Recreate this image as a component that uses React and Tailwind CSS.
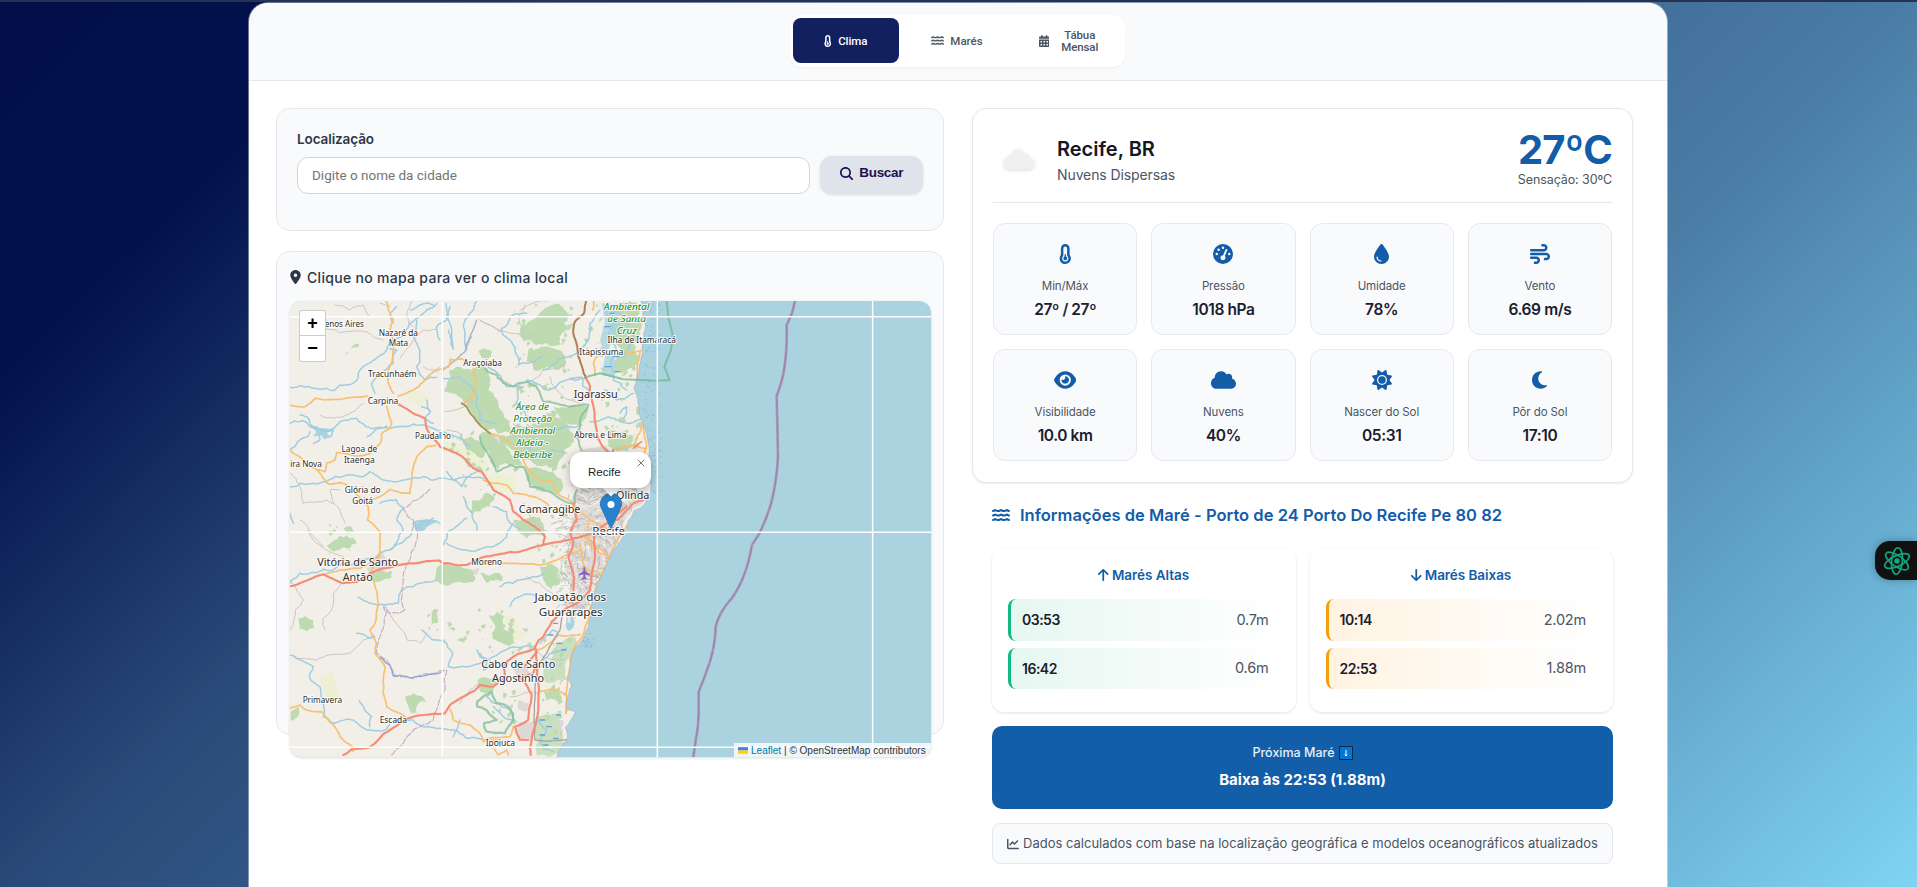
import React from "react";
import {
  FaTemperatureQuarter, FaWater, FaCalendarDays, FaMagnifyingGlass, FaLocationDot, FaGaugeHigh,
  FaDroplet, FaWind, FaEye, FaCloud, FaSun, FaMoon, FaArrowUp, FaArrowDown, FaChartLine,
} from "react-icons/fa6";

function wiggle(points, amp, seed) {
  let s = seed * 9301 + 49297;
  const rnd = () => {
    s = (s * 9301 + 49297) % 233280;
    return s / 233280 - 0.5;
  };
  let pts = points;
  let a = amp;
  for (let k = 0; k < 3; k++) {
    const out = [pts[0]];
    for (let i = 1; i < pts.length; i++) {
      const [x0, y0] = pts[i - 1];
      const [x1, y1] = pts[i];
      const d = Math.hypot(x1 - x0, y1 - y0);
      if (d > 9) {
        const f = Math.min(1, d / 40);
        out.push([(x0 + x1) / 2 + rnd() * a * f, (y0 + y1) / 2 + rnd() * a * f]);
      }
      out.push(pts[i]);
    }
    pts = out;
    a *= 0.7;
  }
  return "M" + pts.map((p) => p[0].toFixed(1) + " " + p[1].toFixed(1)).join("L");
}

const parse = (str) => str.split(" ").map((p) => p.split(",").map(Number));

const COAST = "1082,33 1088,80 1096,115 1090,150 1088,190 1078,235 1070,268 1062,292 1074,330 1080,380 1095,415 1103,450 1106,500 1108,560 1112,610 1095,640 1062,662 1046,690 1030,735 1008,770 990,800 968,850 950,890 938,930 930,985 915,1035 888,1070 872,1110 862,1165 876,1182 864,1220 860,1252 886,1266 872,1290 856,1312 862,1350 842,1372 830,1402";

const FORESTS = [
  "494,305 512,262 508,240 530,230 560,238 590,225 625,240 630,275 640,310 655,335 668,365 690,392 690,430 655,432 615,415 590,395 572,365 550,335 528,312",
  "720,115 750,92 790,60 815,45 850,50 868,75 850,98 862,120 838,140 842,165 800,160 770,165 748,150 722,142",
  "745,180 790,170 840,180 858,215 835,240 800,232 760,240 740,215",
  "595,182 615,175 636,185 632,200 605,202",
  "197,190 238,160 236,170 202,194",
  "655,435 700,425 760,400 810,380 860,395 880,430 870,470 850,500 830,530 800,525 760,520 720,500 690,475 660,465",
  "820,350 880,345 925,350 920,380 900,410 850,400",
  "598,435 620,425 650,450 680,470 710,500 730,530 700,525 672,520 655,545 640,530 630,490 605,470",
  "735,535 790,540 830,560 850,590 840,610 800,600 760,590 740,570",
  "545,448 590,450 612,470 606,505 585,490 560,480",
  "580,635 612,612 640,618 630,650 600,665 575,655",
  "700,690 760,680 790,700 780,735 740,745 715,725",
  "985,50 1040,40 1080,60 1085,110 1060,160 1080,200 1060,235 1020,250 990,230 1030,190 1000,150 990,100",
  "985,420 1030,425 1060,440 1060,470 1020,482 985,470",
  "1068,352 1088,348 1092,372 1070,376",
  "275,850 300,838 335,842 336,862 300,874 270,870",
  "55,985 75,978 100,990 104,1015 85,1022 60,1018",
  "140,768 170,748 200,735 222,742 230,760 200,775 160,785",
  "190,715 215,710 222,722 205,732",
  "455,965 475,960 472,1000 455,1008",
  "625,975 650,965 672,980 665,1010 700,1040 710,1062 680,1065 655,1055 635,1030 645,1005",
  "530,1050 560,1035 552,1058",
  "375,1225 400,1210 425,1218 438,1235 410,1250 412,1268 390,1262",
  "592,1170 640,1165 655,1180 640,1200 600,1205",
  "470,835 540,830 580,848 585,870 520,878 465,870",
  "600,848 660,850 668,872 620,880",
  "790,1130 830,1060 880,1040 890,1060 870,1100 860,1170 820,1180 790,1165",
  "792,1205 820,1195 842,1212 835,1240 800,1232",
  "760,1290 820,1270 850,1280 845,1330 850,1350 820,1395 770,1395 765,1330",
  "780,830 835,835 840,880 815,900 790,870",
  "32,1265 52,1250 58,1268 42,1292 32,1290",
];

const PALE = [
  "375,310 425,305 455,328 430,345 395,338",
  "485,445 540,460 590,490 622,515 622,560 590,545 560,520 520,490 490,465",
  "610,575 640,545 672,555 705,560 710,600 670,608 640,590",
  "120,1155 155,1145 175,1230 140,1240",
  "670,970 705,990 740,1040 715,1050 690,1030",
];

const URBAN = [
  "890,600 940,600 985,640 1030,640 1060,620 1095,625 1060,655 1030,700 1008,760 975,820 940,900 920,960 885,990 850,960 870,900 850,850 870,790 860,730 880,690 870,640",
  "900,480 960,470 1000,490 1000,600 930,600 890,560",
  "610,440 650,430 660,455 640,480 612,468",
  "260,838 300,780 315,800 345,830 310,840 280,865",
  "520,830 600,835 590,855 540,850",
  "715,1230 745,1240 740,1265 712,1255",
  "715,1300 760,1292 755,1350 712,1345",
  "800,1298 850,1290 850,1325 815,1330",
  "700,1135 740,1120 750,1150 720,1180",
];

const RIVERS = [
  "30,292 75,290 110,296 160,302 180,285 215,282 240,240 275,215 312,190 330,160 365,140 385,110 410,85 440,60 470,40",
  "410,90 400,140 420,180 410,230 435,270 470,262",
  "285,310 275,285 290,262 340,220 350,180 330,175",
  "392,60 420,45 460,45", "340,100 330,70 350,50",
  "30,400 70,392 125,418 140,425 180,395 230,385 258,410 300,412 360,410 430,405 470,420 530,440 570,470",
  "60,375 90,400 125,418 120,450 100,460", "125,418 160,420 150,440",
  "30,480 60,450 90,425", "262,440 300,415 320,408",
  "440,330 450,365 435,385 460,400", "425,350 452,365",
  "30,590 60,580 110,582 150,568 220,555 250,560 270,545 310,570 370,570 430,560 470,568 520,570 560,560 610,565",
  "500,545 520,570 545,590 560,565 590,545", "505,120 515,150 520,178 505,90 510,50",
  "575,140 560,180 555,90 580,60 590,33", "480,150 470,110 500,90 498,40",
  "665,115 690,150 710,195 715,225 765,215 785,200", "665,115 690,80 740,70",
  "490,265 540,262 580,300 590,350 600,390 650,400",
  "712,295 710,340 740,380 790,385", "590,225 640,240 680,290 730,290",
  "960,60 930,100 925,150 890,190 830,215 790,240", "870,265 905,262 925,300",
  "740,270 800,300 860,270 920,262", "300,640 350,630 370,655 350,690 370,720 330,780",
  "40,700 30,670", "410,710 430,695 460,685 400,700 395,730 370,755 330,780 290,800 240,812",
  "30,880 60,850 110,848 150,842 200,820 240,812", "235,922 270,940 315,945 355,940 365,900 420,880 470,870",
  "490,765 500,730 540,700 560,685", "500,760 560,780 640,770 680,740 700,700",
  "550,620 560,650 580,690 590,720", "640,650 680,665 690,700 720,720",
  "690,950 705,925 750,912 770,925", "660,890 700,880 760,860 790,850",
  "425,1020 460,1050 500,1060 518,1090 505,1130 560,1130 600,1120 640,1100 700,1070 760,1070",
  "30,1095 60,1110 100,1130 90,1165 120,1190 130,1280 160,1300 220,1290 260,1320 320,1318 350,1290 400,1290 440,1310 520,1320 560,1345 620,1350 690,1352",
  "238,1232 255,1262 275,1280 270,1310", "540,1290 530,1320 520,1340",
  "230,1030 270,1045 285,1040", "590,1080 620,1110 610,1140 640,1120 600,1090",
  "980,60 1000,100 985,140 1010,180 990,220 1000,270 1040,300",
  "1000,60 1040,90 1060,140 1030,200", "975,300 1010,330 1060,310",
  "1020,370 1040,350 1030,385", "930,395 985,380 1040,400 1090,385",
  "800,430 850,410 905,405", "860,490 820,480 770,500 740,470",
  "780,1060 800,1035 820,1020 835,1035 815,1060", "790,1110 820,1085 860,1075",
  "620,1220 650,1240 690,1260 700,1290 670,1280 640,1250", "775,1290 800,1320 780,1360 820,1385",
  "400,700 440,690 480,700", "405,705 430,720 450,690",
];

const MINOR = [
  "135,115 180,128 260,125 310,150", "165,45 210,60 250,45 270,80", "360,205 400,150 430,120 470,118",
  "400,30 380,80 400,110", "250,340 210,370 160,385 120,375", "30,548 60,590 70,640 110,635 140,630 180,660 195,700",
  "430,230 460,240 480,230", "495,365 540,355 560,345 590,330", "600,90 640,110 700,130 740,150 770,130",
  "80,720 110,760 160,790 190,800 200,830", "60,690 100,740 130,770", "190,860 160,910 155,960 130,985 135,1020",
  "30,870 70,930 45,960 40,1000 30,1020", "40,1100 110,1110 150,1095 210,1090 250,1050 280,1035",
  "315,945 340,990 360,1015 380,1050 420,1060 440,1030", "650,265 700,290 760,270 790,240 850,225",
  "700,400 720,440 760,480", "560,470 540,430 500,420", "300,40 330,50", "720,60 760,40 800,33",
  "540,1240 570,1200 600,1180", "690,1220 730,1210 770,1210", "810,260 830,300 870,330 900,340",
  "735,45 715,80 730,120", "180,600 150,600 160,640", "760,1080 790,1100 850,1110",
  "730,640 760,690 790,720 860,740", "740,860 780,880 800,900 830,930 870,940",
];

const ORANGE = [
  "318,33 325,60 340,90 330,125 345,160 338,200 325,240 325,280 340,310",
  "30,345 75,350 105,325 170,328 262,318", "355,318 400,300 430,275 455,250 480,238 505,232 510,208 545,206 560,215",
  "580,235 590,275 585,310 552,340", "320,350 335,400 330,415 305,430 300,460 270,490 230,498 170,488 165,510 140,520 135,545 112,540 85,520 30,482",
  "112,540 145,582 180,578 215,595 225,610", "280,628 330,598 360,608 390,610 395,560 410,500 440,470 468,466",
  "225,608 265,650 262,690 300,725 300,790 275,840 280,870 295,940 285,1000 270,1020 290,1060 285,1090 315,1130 310,1210 320,1250 375,1280",
  "130,855 180,840 240,835 300,800", "630,432 655,437 700,465 730,510 750,545 780,570 820,575 830,610 880,640 930,690 990,720",
  "600,825 700,820 780,825 830,810 870,790 900,780", "610,570 680,585 700,610 760,620 800,640 850,680",
  "940,33 938,60", "945,255 940,220 960,190 980,185", "1030,185 1060,190 1082,182 1072,230 1072,265",
  "1093,390 1078,430 1060,465 1010,478", "1060,465 1100,475", "1090,400 1100,460 1095,500",
  "30,1255 60,1245 80,1260 125,1265 160,1305 180,1340 218,1370 218,1385", "510,1258 520,1290 570,1305 600,1330 610,1355 660,1350",
  "770,1080 800,1065 835,1035 900,1033", "775,1205 820,1195 860,1215 858,1270",
  "640,1370 655,1395 680,1380 685,1395", "990,800 960,790 930,750 880,725", "900,760 905,810 920,840 960,850",
  "925,700 920,760 960,775 985,800", "700,1310 690,1340 620,1345",
  "910,1035 885,1070 870,1110 862,1165 858,1210 858,1270",
  "1045,700 1010,755 988,800 965,850 945,900 932,950 925,990 910,1035",
];

const REDS = [
  "355,343 400,370 435,385 440,415 465,450 480,470 530,490 580,535 605,545 640,600 690,630 700,665 730,690 770,715 795,740 790,765",
  "915,262 930,290 938,340 950,420 965,465 1000,500 1020,540", "880,640 890,690 870,730 880,760 865,800 880,850 880,900",
  "30,888 70,875 130,853 190,880 230,876 270,850 310,835 400,820 480,812 488,820 560,825 600,805 660,792 720,785 800,762 880,745 940,725 980,700",
  "980,700 1010,690 1060,640 1090,630", "945,730 945,790 935,850 930,900 890,940 840,970 815,995 790,1040 765,1070 770,1110 775,1180 775,1260 768,1300 755,1350 752,1395",
  "765,1075 700,1100 670,1130 675,1160 640,1190 600,1185 560,1215 510,1245 495,1270 430,1275 385,1285 330,1320 270,1372 215,1378 190,1395",
  "720,1160 755,1215 745,1290 705,1310 720,1350 745,1350", "715,1160 760,1150 770,1120",
  "1000,480 985,520 990,600 1000,690", "1085,455 1060,475",
  "985,700 1040,650", "770,1085 735,1130",
];

function urbanLines() {
  let s = 77;
  const rnd = () => {
    s = (s * 9301 + 49297) % 233280;
    return s / 233280;
  };
  let d = "";
  for (let i = 0; i < 330; i++) {
    const y = 500 + rnd() * 470;
    const right = y < 620 ? 1090 : 1085 - (y - 620) * 0.48;
    const left = y < 600 ? 880 + rnd() * 30 : 835 + rnd() * 30;
    const x = left + rnd() * (right - left - 12);
    const a = rnd() * 3.14;
    const l = 10 + rnd() * 26;
    const dx = Math.cos(a) * l;
    const dy = Math.sin(a) * l;
    d += `M${x.toFixed(0)} ${y.toFixed(0)}q${(dx / 2 + 5).toFixed(0)} ${(dy / 2 - 4).toFixed(0)} ${Math.min(dx, right - x).toFixed(0)} ${dy.toFixed(0)}`;
  }
  return d;
}

function speckles() {
  let s = 1234;
  const rnd = () => {
    s = (s * 9301 + 49297) % 233280;
    return s / 233280;
  };
  const zones = [
    [700, 40, 170, 200, 60], [690, 280, 200, 260, 70], [480, 420, 140, 150, 20], [540, 480, 100, 200, 14],
    [960, 200, 110, 270, 45], [440, 960, 260, 110, 18], [110, 700, 120, 90, 10], [620, 1000, 130, 90, 14],
    [780, 1040, 90, 330, 40], [760, 640, 100, 280, 22], [600, 1200, 110, 120, 12], [900, 40, 70, 160, 14],
  ];
  let d = "";
  for (const [x, y, w, h, n] of zones) {
    for (let i = 0; i < n; i++) {
      const px = x + rnd() * w;
      const py = y + rnd() * h;
      const r = 3 + rnd() * 9;
      d += `M${px.toFixed(0)} ${py.toFixed(0)}l${r.toFixed(0)} ${(-r * rnd()).toFixed(0)}l${(r * rnd()).toFixed(0)} ${(r * 0.9).toFixed(0)}l${(-r).toFixed(0)} ${(r * 0.8).toFixed(0)}z`;
    }
  }
  return d;
}

function seaDots() {
  let s = 991;
  const rnd = () => {
    s = (s * 9301 + 49297) % 233280;
    return s / 233280;
  };
  let d = "";
  for (let i = 0; i < 120; i++) d += `M${(1092 + rnd() * 52).toFixed(0)} ${(40 + rnd() * 580).toFixed(0)}h3`;
  for (let i = 0; i < 26; i++) d += `M${(905 + rnd() * 38).toFixed(0)} ${(1030 + rnd() * 45).toFixed(0)}h3`;
  return d;
}

const LABELS = [
  ["enos Aires", 193, 110, 118, 25], ["Nazaré da", 355, 137, 118, 25], ["Mata", 355, 169, 58, 25],
  ["Tracunhaém", 337, 260, 146, 25], ["Carpina", 309, 341, 92, 25], ["Araçoiaba", 608, 228, 116, 25],
  ["Paudalho", 459, 446, 108, 25], ["Lagoa de", 238, 487, 107, 25], ["Itaenga", 238, 518, 92, 25],
  ["ira Nova", 78, 530, 95, 25], ["Glória do", 248, 610, 108, 25], ["Goitá", 248, 642, 62, 25],
  ["Itapissuma", 964, 195, 132, 25], ["Ilha de Itamaracá", 1085, 158, 205, 25], ["Igarassu", 947, 323, 132, 31],
  ["Abreu e Lima", 961, 443, 157, 25], ["Camaragibe", 809, 670, 185, 32], ["Olinda", 1058, 627, 100, 32],
  ["Recife", 986, 735, 98, 32], ["Vitória de Santo", 233, 829, 243, 32], ["Antão", 233, 872, 90, 32],
  ["Moreno", 620, 826, 92, 25], ["Jaboatão dos", 871, 933, 215, 32], ["Guararapes", 872, 978, 192, 32],
  ["Cabo de Santo", 715, 1134, 222, 32], ["Agostinho", 714, 1176, 156, 32], ["Primavera", 127, 1240, 118, 25],
  ["Escada", 340, 1298, 82, 25], ["Ipojuca", 661, 1367, 88, 25],
];

const PARKS = [
  ["Área de", 757, 361, 100], ["Proteção", 758, 397, 116], ["Ambiental", 758, 433, 135], ["Aldeia -", 757, 469, 98],
  ["Beberibe", 758, 505, 117], ["Ambiental", 1040, 61, 137], ["de Santa", 1040, 95, 116], ["Cruz", 1040, 131, 60],
];

const SEA_BORDER = "M1545 33L1536 70L1520 105Q1522 180 1512 240Q1508 270 1490 318L1492 400L1494 500Q1490 580 1472 645Q1458 690 1437 732L1416 765Q1408 810 1396 845Q1378 895 1355 925Q1318 965 1307 1010Q1306 1060 1290 1115Q1275 1160 1256 1205L1256 1270Q1254 1320 1248 1345L1240 1402";

function MapDrawing() {
  const land = wiggle(parse(COAST), 9, 5) + "L30 1402L30 33Z";
  return (
    <svg viewBox="0 0 641 456" className="block h-[456px] w-[641px]">
      <defs>
        <clipPath id="land"><path d={land} /></clipPath>
      </defs>
      <rect width="641" height="456" fill="#aad3df" />
      <g transform="translate(-10 -11) scale(.33333)" fill="none" strokeLinejoin="round" strokeLinecap="round">
        <path d={seaDots()} stroke="#7fb2d2" strokeWidth="2.5" opacity=".75" />
        <path d={land} fill="#f2efe9" />
        <g clipPath="url(#land)">
          {PALE.map((p, i) => <path key={i} d={wiggle(parse(p), 14, i + 2) + "Z"} fill="#eef0d5" />)}
          {URBAN.map((p, i) => <path key={i} d={wiggle(parse(p), 14, i + 9) + "Z"} fill="#dcd9d6" />)}
          {FORESTS.map((p, i) => <path key={i} d={wiggle(parse(p), 22, i + 3) + "Z"} fill={i === 26 || i === 28 ? "#c9dfc0" : "#bddab1"} />)}
          <path d={speckles()} fill="#bddab1" />
          <path d="M965 40L1010 45L1020 90L1000 140L985 180L1010 215L1000 262L965 255L975 200L960 150L975 100Z" fill="#aad3df" opacity=".8" />
          <path d="M860 985q20 -12 24 8q0 24 -18 30q-14 -8 -6 -38z" fill="#aad3df" />
          <path d="M90 405l25 5l-8 8l30 -4l22 6l-18 8l10 14l-18 6l-10 -12l-24 4l10 -14zM405 700l30 -8l40 -2l-22 14l-18 8l-14 14l-16 -6z" fill="#aad3df" />
          {MINOR.map((p, i) => <path key={i} d={wiggle(parse(p), 10, i + 31)} stroke="#c9c4c4" strokeWidth="3" />)}
          <path d={urbanLines()} stroke="#b9b5b5" strokeWidth="2.4" />
          <path d={urbanLines()} transform="translate(-8 14)" stroke="#fff" strokeWidth="2" opacity=".8" />
          {RIVERS.map((p, i) => <path key={i} d={wiggle(parse(p), 15, i + 11)} stroke="#a0cee0" strokeWidth="4.5" />)}
          <path d={wiggle(parse("615,235 650,255 670,280 700,290 740,275 770,290 790,335 870,350 925,345 900,395 890,440 905,480"), 12, 4)} stroke="#86bf9c" strokeWidth="6" opacity=".8" />
          <path d={wiggle(parse("600,440 615,480 640,520 650,545 690,525 730,530 750,590 790,600 830,620 885,640 890,600"), 12, 8)} stroke="#86bf9c" strokeWidth="6" opacity=".8" />
          <path d={wiggle(parse("592,1235 635,1205 650,1240 690,1255 700,1290 675,1330 620,1325 612,1300 650,1290 620,1260 592,1250 592,1235"), 10, 7)} stroke="#86bf9c" strokeWidth="7" opacity=".8" />
          <path d={wiggle(parse("590,90 570,140 555,185 520,215 490,240"), 8, 6)} stroke="#9c9cc0" strokeWidth="4" opacity=".8" />
          <path d={wiggle(parse("600,90 660,125 665,118"), 8, 6)} stroke="#c6b1c8" strokeWidth="3" strokeDasharray="14 6" />
          <path d={wiggle(parse("450,598 410,630 370,655 400,690 412,730 405,770 370,850 365,900 375,960 330,970 310,950 320,970 300,1040 290,1090 330,1130 345,1160 400,1165 460,1150 500,1140 495,1200 460,1290 420,1310 370,1360 335,1395"), 12, 3)} stroke="#c4aec6" strokeWidth="3.5" strokeDasharray="18 6" />
          <path d={wiggle(parse("300,1102 330,1125 340,1158 395,1165 440,1155 490,1142"), 12, 13)} stroke="#8fa5cf" strokeWidth="4" />
          {ORANGE.map((p, i) => <path key={i} d={wiggle(parse(p), 7, i + 17)} stroke="#f9bf72" strokeWidth="5" />)}
          <path d={wiggle(parse("545,340 560,350 580,380 600,405 630,430"), 6, 2)} stroke="#a59a5a" strokeWidth="6" />
          <path d={wiggle(parse("918,33 912,70 885,95 880,130 892,170 895,200 910,245 918,262"), 6, 2)} stroke="#b07f4d" strokeWidth="6" />
          <path d={wiggle(parse("850,960 840,1020 800,1090 775,1130 765,1190 762,1290 765,1350 820,1352 860,1350"), 5, 2)} stroke="#a9a5a3" strokeWidth="4" />
          {REDS.map((p, i) => <path key={i} d={wiggle(parse(p), 7, i + 5)} stroke="#f58d76" strokeWidth={i === 10 ? 5 : 6.5} />)}
          <path d="M960 80h14M975 110h16M990 70h12M985 150h14M1000 200h16M975 230h18M1005 245h14M820 1000h12M805 1035h14M830 1060h16M845 1080h12M780 1290h14M800 1310h14M780 1335h14M820 1345h14M790 1365h14M830 1275h12" stroke="#5aa5dc" strokeWidth="4" />
        </g>
        <path d={wiggle(parse(COAST), 9, 5)} stroke="#a08fb4" strokeWidth="2" opacity=".6" />
        <path d="M1160 33L1165 80L1178 135L1173 180L1153 230L1169 270L1130 272L1030 268L960 250L915 262" stroke="#6db892" strokeWidth="6" opacity=".75" />
        <path d={SEA_BORDER} stroke="#a596b5" strokeWidth="8" />
        <path d={SEA_BORDER} stroke="#9a7ba5" strokeWidth="2.5" strokeDasharray="30 8" />
        <path transform="translate(913 850) scale(1.5)" d="M-2 -11q2 -3 4 0v7l9 6v3l-9 -3v6l3 3v2l-5 -1l-5 1v-2l3 -3v-6l-9 3v-3l9 -6z" fill="#8461c4" />
        <g textAnchor="middle" fontFamily="Noto Sans, sans-serif" paintOrder="stroke" stroke="#fff" strokeOpacity=".8" strokeWidth="6">
          {LABELS.map(([t, x, y, w, s]) => (
            <text key={t} x={x} y={y} textLength={w} lengthAdjust="spacingAndGlyphs" fontSize={s} fill="#2e2e2e">{t}</text>
          ))}
          {PARKS.map(([t, x, y, w]) => (
            <text key={t + y} x={x} y={y} textLength={w} lengthAdjust="spacingAndGlyphs" fontSize="29" fontStyle="italic" fill="#118811">{t}</text>
          ))}
        </g>
        <path d="M487 30V1405M1132 30V1405M1778 30V1405M28 80H1955M28 727H1955M28 1372H1955" stroke="#fff" strokeWidth="4.5" strokeLinecap="butt" />
      </g>
    </svg>
  );
}

const STATS = [
  [FaTemperatureQuarter, "w-[12.5px]", "Min/Máx", "27º / 27º"],
  [FaGaugeHigh, "w-5", "Pressão", "1018 hPa"],
  [FaDroplet, "w-[15px]", "Umidade", "78%"],
  [FaWind, "w-5", "Vento", "6.69 m/s"],
  [FaEye, "w-[22.5px]", "Visibilidade", "10.0 km"],
  [FaCloud, "w-[25px]", "Nuvens", "40%"],
  [FaSun, "w-5", "Nascer do Sol", "05:31"],
  [FaMoon, "w-[15px]", "Pôr do Sol", "17:10"],
];

function Stat({ Icon, width, label, value }) {
  return (
    <div className="flex h-[112px] flex-col items-center rounded-xl border border-[#e7e9ee] bg-[#f9fafc] pt-5">
      <Icon className={"h-5 text-[#125ca8] " + width} />
      <span className="mt-[12px] text-[11.5px] leading-5 tracking-[-0.1px] text-[#4b5563]">{label}</span>
      <span className="mt-[2px] text-[15.5px] leading-6 font-semibold tracking-[-0.4px] text-[#1a202c]">{value}</span>
    </div>
  );
}

function Tides({ Icon, title, rows, row }) {
  return (
    <div className="h-[163px] flex-1 rounded-xl bg-white px-4 pt-[16px] shadow-[0_1px_3px_rgba(0,0,0,0.12)]">
      <h3 className="flex h-5 items-center justify-center gap-[3px] text-[13.5px] font-semibold tracking-[-0.05px] text-[#125ca8]">
        <Icon className="h-[14px] w-[10.5px]" />{title}
      </h3>
      <div className="mt-[14px] flex flex-col gap-[7px]">
        {rows.map(([time, h]) => (
          <div key={time} className={"flex h-[41.5px] items-center justify-between rounded-lg border-l-[3px] pr-[11px] pl-[11px] " + row}>
            <span className="text-[14px] font-semibold tracking-[-0.5px] text-[#1a202c]">{time}</span>
            <span className="text-[14.5px] tracking-[-0.2px] text-[#4b5563]">{h}</span>
          </div>
        ))}
      </div>
    </div>
  );
}

export default function App() {
  return (
    <div className="relative h-[887px] w-full overflow-hidden bg-[linear-gradient(135deg,#020f49_0%,#03124c_14%,#294a78_32%,#4a7ca6_68%,#7fd4f3_100%)] pt-[2px] font-['Inter',sans-serif]">
      <div className="absolute inset-x-0 top-0 h-[2px] bg-[#26324f]" />
      <main className="ml-[248px] h-[900px] w-[1420px] overflow-hidden rounded-t-[20px] border border-white/40 bg-white bg-clip-padding">
        <header className="flex h-[78px] justify-center border-b border-[#e5e7eb] bg-[#f9fafc] pt-[12px] pr-[2px]">
          <nav className="flex h-[52px] w-[335px] gap-[5.5px] rounded-xl bg-white p-[3px] font-['Roboto',sans-serif] text-[11.5px] leading-[12px] font-medium text-[#4b5563] shadow-[0_1px_2px_rgba(0,0,0,0.05)]">
            <button className="flex h-[45px] w-[106px] items-center justify-center gap-[7px] rounded-lg bg-[#13205f] text-white">
              <FaTemperatureQuarter className="h-[12px] w-[7.5px]" /><span className="tracking-[-0.1px]">Clima</span>
            </button>
            <button className="flex h-[45px] w-[106px] items-center justify-center gap-[6px]">
              <FaWater className="size-[13px]" /><span>Marés</span>
            </button>
            <button className="flex h-[45px] w-[106px] items-center justify-center gap-[12px]">
              <FaCalendarDays className="h-[12px] w-[10.5px]" /><span className="tracking-[-0.1px]">Tábua<br />Mensal</span>
            </button>
          </nav>
        </header>

        <div className="flex gap-7 pt-[27px] pl-[27px]">
          <section className="flex w-[668px] flex-col gap-5">
            <div className="h-[123px] rounded-[14px] border border-[#e5e7eb] bg-[#f9fafc] px-5 pt-[20px]">
              <label className="block text-[13.5px] leading-5 font-semibold tracking-[-0.1px] text-[#2d3748]">Localização</label>
              <div className="mt-[7px] flex items-end gap-[10px]">
                <div className="flex h-[37px] w-[513px] items-center rounded-[11px] border border-[#d1d5db] bg-white px-[14px] font-['Roboto',sans-serif] text-[13.5px] text-[#757575]">Digite o nome da cidade</div>
                <button className="flex h-[38px] w-[103px] items-center justify-center gap-[6px] rounded-xl bg-[#dfe3ea] pb-[3px] font-['Liberation_Sans',sans-serif] text-[13.5px] font-bold tracking-[-0.3px] text-[#1c1152] shadow-[0_1px_3px_rgba(0,0,0,0.12)]">
                  <FaMagnifyingGlass className="size-[13.5px]" />Buscar
                </button>
              </div>
            </div>

            <div className="h-[484px] rounded-[14px] border border-[#e5e7eb] bg-[#f9fafc] px-[13px] pt-[15px]">
              <h2 className="flex h-5 items-center gap-[6px] text-[14px] font-medium tracking-[0.3px] text-[#2d3748]">
                <FaLocationDot className="h-[14px] w-[11px]" />Clique no mapa para ver o clima local
              </h2>
              <div className="relative mt-[14px] h-[456px] w-[641px] overflow-hidden rounded-xl shadow-[0_1px_3px_rgba(0,0,0,0.15)]">
                <MapDrawing />
                <div className="absolute top-[9px] left-[9px] w-[27px] rounded-[3px] border border-black/20 bg-white text-center font-['Liberation_Sans',sans-serif] text-[18px] leading-[25px] font-bold text-black">
                  <div className="h-[25px] border-b border-[#ccc]">+</div>
                  <div className="h-[25px]">−</div>
                </div>
                <svg viewBox="0 0 25 41" className="absolute top-[192px] left-[310px] h-[36px] w-[22px]">
                  <path d="M12.5 .5C5.6 .5 .5 5.8 .5 12.4c0 2.2.9 4.600 1.800 6.400L12.500 40.500 22.700 18.800c1-1.800 1.800-4.200 1.800-6.400C24.500 5.800 19.400 .5 12.500 .5z" fill="#2a81cb" stroke="#2270b3" />
                  <circle cx="12.500" cy="13" r="4" fill="#fff" />
                </svg>
                <div className="absolute top-[181px] left-[315px] size-[12px] rotate-45 bg-white shadow-md" />
                <div className="absolute top-[151px] left-[280px] h-[36px] w-[81px] rounded-xl bg-white pt-[13px] pl-[18px] font-['Liberation_Sans',sans-serif] text-[11.500px] leading-[14px] text-[#222] shadow-[0_2px_8px_rgba(0,0,0,0.3)]">Recife</div>
                <svg viewBox="0 0 8 8" className="absolute top-[158px] left-[347px] size-2"><path d="M.7 .7l6.600 6.600M7.300 .7L.7 7.300" stroke="#757575" strokeWidth="1" /></svg>
                <div className="absolute right-0 bottom-0 flex h-[14px] w-[197px] items-center bg-white/80 pl-1 font-['Liberation_Sans',sans-serif] text-[10px] tracking-[0.02px] whitespace-nowrap text-[#333]">
                  <svg viewBox="0 0 12 8" className="mr-[3px] h-[7px] w-[10px]"><path fill="#4C7BE1" d="M0 0h12v4H0z" /><path fill="#FFD500" d="M0 4h12v4H0z" /></svg>
                  <span className="text-[#0078a8]">Leaflet</span><span>&nbsp;| © OpenStreetMap contributors</span>
                </div>
              </div>
            </div>
          </section>

          <section className="w-[661px]">
            <div className="h-[375px] rounded-[14px] border border-[#e5e7eb] bg-white px-5 shadow-[0_1px_2px_rgba(0,0,0,0.08)]">
              <div className="flex h-[94px] border-b border-[#e5e7eb]">
                <svg viewBox="0 0 32 24" className="mt-[38px] ml-[10px] h-6 w-8 drop-shadow-sm"><path d="M6 22a6 6 0 0 1-1-11.500Q6 8 9 7.500Q12 2 15 2Q19 2 21 6.500Q26 7 27 11.500Q31 13 31 16.500Q31 21 26 22z" fill="#f0f0ef" /></svg>
                <div className="ml-[22px] pt-[26px]">
                  <h1 className="text-[20px] leading-7 font-semibold text-[#111827]">Recife, BR</h1>
                  <p className="mt-[2px] text-[14px] leading-5 tracking-[-0.1px] text-[#4b5563]">Nuvens Dispersas</p>
                </div>
                <div className="ml-auto pt-[21px] text-right">
                  <div className="text-[40px] leading-[40px] font-bold tracking-[-0.8px] text-[#125ca8]">27ºC</div>
                  <p className="text-[12.5px] leading-5 tracking-[-0.1px] text-[#4b5563]">Sensação: 30ºC</p>
                </div>
              </div>
              <div className="mt-5 grid grid-cols-4 gap-[14px]">
                {STATS.map(([Icon, width, label, value]) => <Stat key={label} Icon={Icon} width={width} label={label} value={value} />)}
              </div>
            </div>

            <div className="px-5">
              <h2 className="mt-[20px] flex h-6 items-center gap-[10px] text-[16.500px] font-semibold tracking-[0.03px] whitespace-nowrap text-[#125ca8]">
                <FaWater className="h-[16px] w-[18px]" />Informações de Maré - Porto de 24 Porto Do Recife Pe 80 82
              </h2>
              <div className="mt-[22px] flex gap-[14px]">
                <Tides Icon={FaArrowUp} title="Marés Altas" rows={[["03:53", "0.7m"], ["16:42", "0.6m"]]} row="border-[#10b981] bg-[linear-gradient(90deg,#e6f7f1,#ffffff)]" />
                <Tides Icon={FaArrowDown} title="Marés Baixas" rows={[["10:14", "2.02m"], ["22:53", "1.88m"]]} row="border-[#f59e0b] bg-[linear-gradient(90deg,#fff3e2,#ffffff)]" />
              </div>
              <div className="mt-[14px] h-[83px] rounded-[10px] bg-[#135ea9] pt-[17px] text-center text-white">
                <p className="flex h-5 items-center justify-center gap-1 text-[12.500px] font-medium text-white/90">
                  Próxima Maré
                  <svg viewBox="0 0 14 14" className="size-[14px]"><path d="M.5 .5h13v13H.5z" fill="#0078d7" stroke="#0b2545" /><path d="M7 4v5.500M5.800 8.500L7 10L8.200 8.500" stroke="#fff" fill="none" /></svg>
                </p>
                <p className="mt-[5px] text-[15px] leading-6 font-bold">Baixa às 22:53 (1.88m)</p>
              </div>
              <p className="mt-[14px] flex h-[41px] items-center justify-center gap-1 rounded-lg border border-[#e5e7eb] bg-[#f9fafc] text-[13px] whitespace-nowrap text-[#4b5563]">
                <FaChartLine className="size-[12px]" />Dados calculados com base na localização geográfica e modelos oceanográficos atualizados
              </p>
            </div>
          </section>
        </div>
      </main>
      <aside className="absolute top-[541px] right-0 flex h-[39px] w-[42px] items-center rounded-l-[15px] bg-[#111] pl-[7px] shadow-[0_0_8px_rgba(0,0,0,0.3)]">
        <svg viewBox="-15 -15 30 30" className="size-[30px]" fill="none" stroke="#12a67c" strokeWidth="1.700">
          <ellipse rx="5.400" ry="13.300" transform="rotate(5)" /><ellipse rx="5.400" ry="13.300" transform="rotate(65)" /><ellipse rx="5.400" ry="13.300" transform="rotate(125)" />
          <circle r="2.800" fill="#12a67c" stroke="none" />
        </svg>
      </aside>
    </div>
  );
}
